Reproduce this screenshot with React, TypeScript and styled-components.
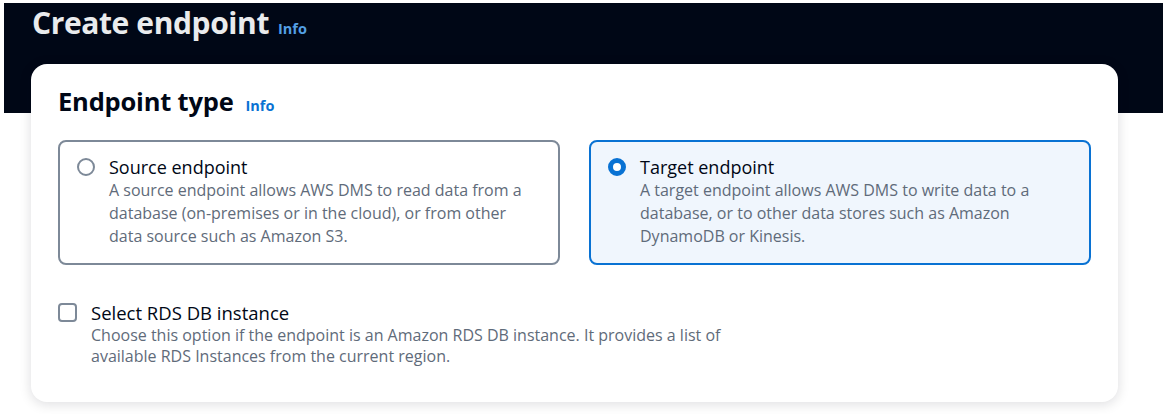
import React from "react";
import styled, { createGlobalStyle } from "styled-components";

const GlobalStyle = createGlobalStyle`
    html, body {
        margin: 0;
        padding: 0;
        background: #ffffff;
    }
    body {
        font-family: "Open Sans", "Noto Sans", sans-serif;
        color: #000716;
    }
`;

const Page = styled.div`
    margin: 3px 4px 0 4px;
    padding: 0 45px 12px 27px;
    background: linear-gradient(to bottom, #000716 0, #000716 110px, #ffffff 110px);
`;

const PageHeader = styled.div`
    display: flex;
    align-items: baseline;
    gap: 9px;
    height: 61px;
    padding-left: 1px;
`;

const PageTitle = styled.h1`
    margin: 0;
    font-size: 30px;
    line-height: 40px;
    font-weight: 700;
    color: #e9ebed;
    letter-spacing: -0.4px;
`;

const InfoLink = styled.a<{ $dark?: boolean }>`
    font-size: 14.5px;
    font-weight: 700;
    color: ${(p) => (p.$dark ? "#539fe5" : "#0972d3")};
    text-decoration: none;
`;

const Card = styled.section`
    background: #ffffff;
    border-radius: 16px;
    box-shadow: 0 2px 12px 1px rgba(0, 7, 22, 0.12);
    padding: 21px 27px 35px 27px;
`;

const CardHeader = styled.div`
    display: flex;
    align-items: baseline;
    gap: 12px;
    margin-bottom: 22px;
`;

const CardTitle = styled.h2`
    margin: 0;
    font-size: 25.5px;
    line-height: 33px;
    font-weight: 700;
    color: #000716;
    letter-spacing: -0.2px;
`;

const TileGrid = styled.div`
    display: grid;
    grid-template-columns: 1fr 1fr;
    gap: 29px;
    margin-bottom: 36px;
`;

const Tile = styled.label<{ $selected?: boolean }>`
    display: flex;
    gap: 14px;
    padding: 13px 16px 15px 17px;
    border: 2px solid ${(p) => (p.$selected ? "#0972d3" : "#7d8998")};
    background: ${(p) => (p.$selected ? "#f0f6fd" : "#ffffff")};
    border-radius: 8px;
    cursor: pointer;
`;

const Radio = styled.span<{ $checked?: boolean }>`
    flex: 0 0 auto;
    box-sizing: border-box;
    width: 18px;
    height: 18px;
    margin-top: 3px;
    border-radius: 50%;
    border: ${(p) => (p.$checked ? "5px solid #0972d3" : "2px solid #7d8998")};
    background: #ffffff;
`;

const Checkbox = styled.span`
    flex: 0 0 auto;
    box-sizing: border-box;
    width: 19px;
    height: 19px;
    margin-top: 2px;
    border-radius: 4px;
    border: 2px solid #7d8998;
    background: #ffffff;
`;

const OptionBody = styled.div`
    display: flex;
    flex-direction: column;
`;

const OptionLabel = styled.span<{ $large?: boolean }>`
    font-size: ${(p) => (p.$large ? "18.5px" : "18px")};
    line-height: 24px;
    color: #000716;
`;

const OptionText = styled.span<{ $compact?: boolean }>`
    font-size: 16px;
    line-height: ${(p) => (p.$compact ? "21px" : "23px")};
    color: #5f6b7a;
`;

const CheckRow = styled.label`
    display: flex;
    gap: 14px;
    max-width: 700px;
`;

const tiles = [
    {
        id: "source",
        label: "Source endpoint",
        text: "A source endpoint allows AWS DMS to read data from a database (on-premises or in the cloud), or from other data source such as Amazon S3.",
    },
    {
        id: "target",
        label: "Target endpoint",
        text: "A target endpoint allows AWS DMS to write data to a database, or to other data stores such as Amazon DynamoDB or Kinesis.",
    },
];

const App: React.FC = () => {
    const [type, setType] = React.useState("target");
    return (
        <>
            <GlobalStyle />
            <Page>
                <PageHeader>
                    <PageTitle>Create endpoint</PageTitle>
                    <InfoLink $dark href="#">Info</InfoLink>
                </PageHeader>
                <Card>
                    <CardHeader>
                        <CardTitle>Endpoint type</CardTitle>
                        <InfoLink href="#">Info</InfoLink>
                    </CardHeader>
                    <TileGrid>
                        {tiles.map((t) => (
                            <Tile key={t.id} $selected={type === t.id} onClick={() => setType(t.id)}>
                                <Radio $checked={type === t.id} />
                                <OptionBody>
                                    <OptionLabel>{t.label}</OptionLabel>
                                    <OptionText>{t.text}</OptionText>
                                </OptionBody>
                            </Tile>
                        ))}
                    </TileGrid>
                    <CheckRow>
                        <Checkbox />
                        <OptionBody>
                            <OptionLabel $large>Select RDS DB instance</OptionLabel>
                            <OptionText $compact>
                                Choose this option if the endpoint is an Amazon RDS DB instance. It provides a list of available RDS Instances from the current region.
                            </OptionText>
                        </OptionBody>
                    </CheckRow>
                </Card>
            </Page>
        </>
    );
};

export default App;
